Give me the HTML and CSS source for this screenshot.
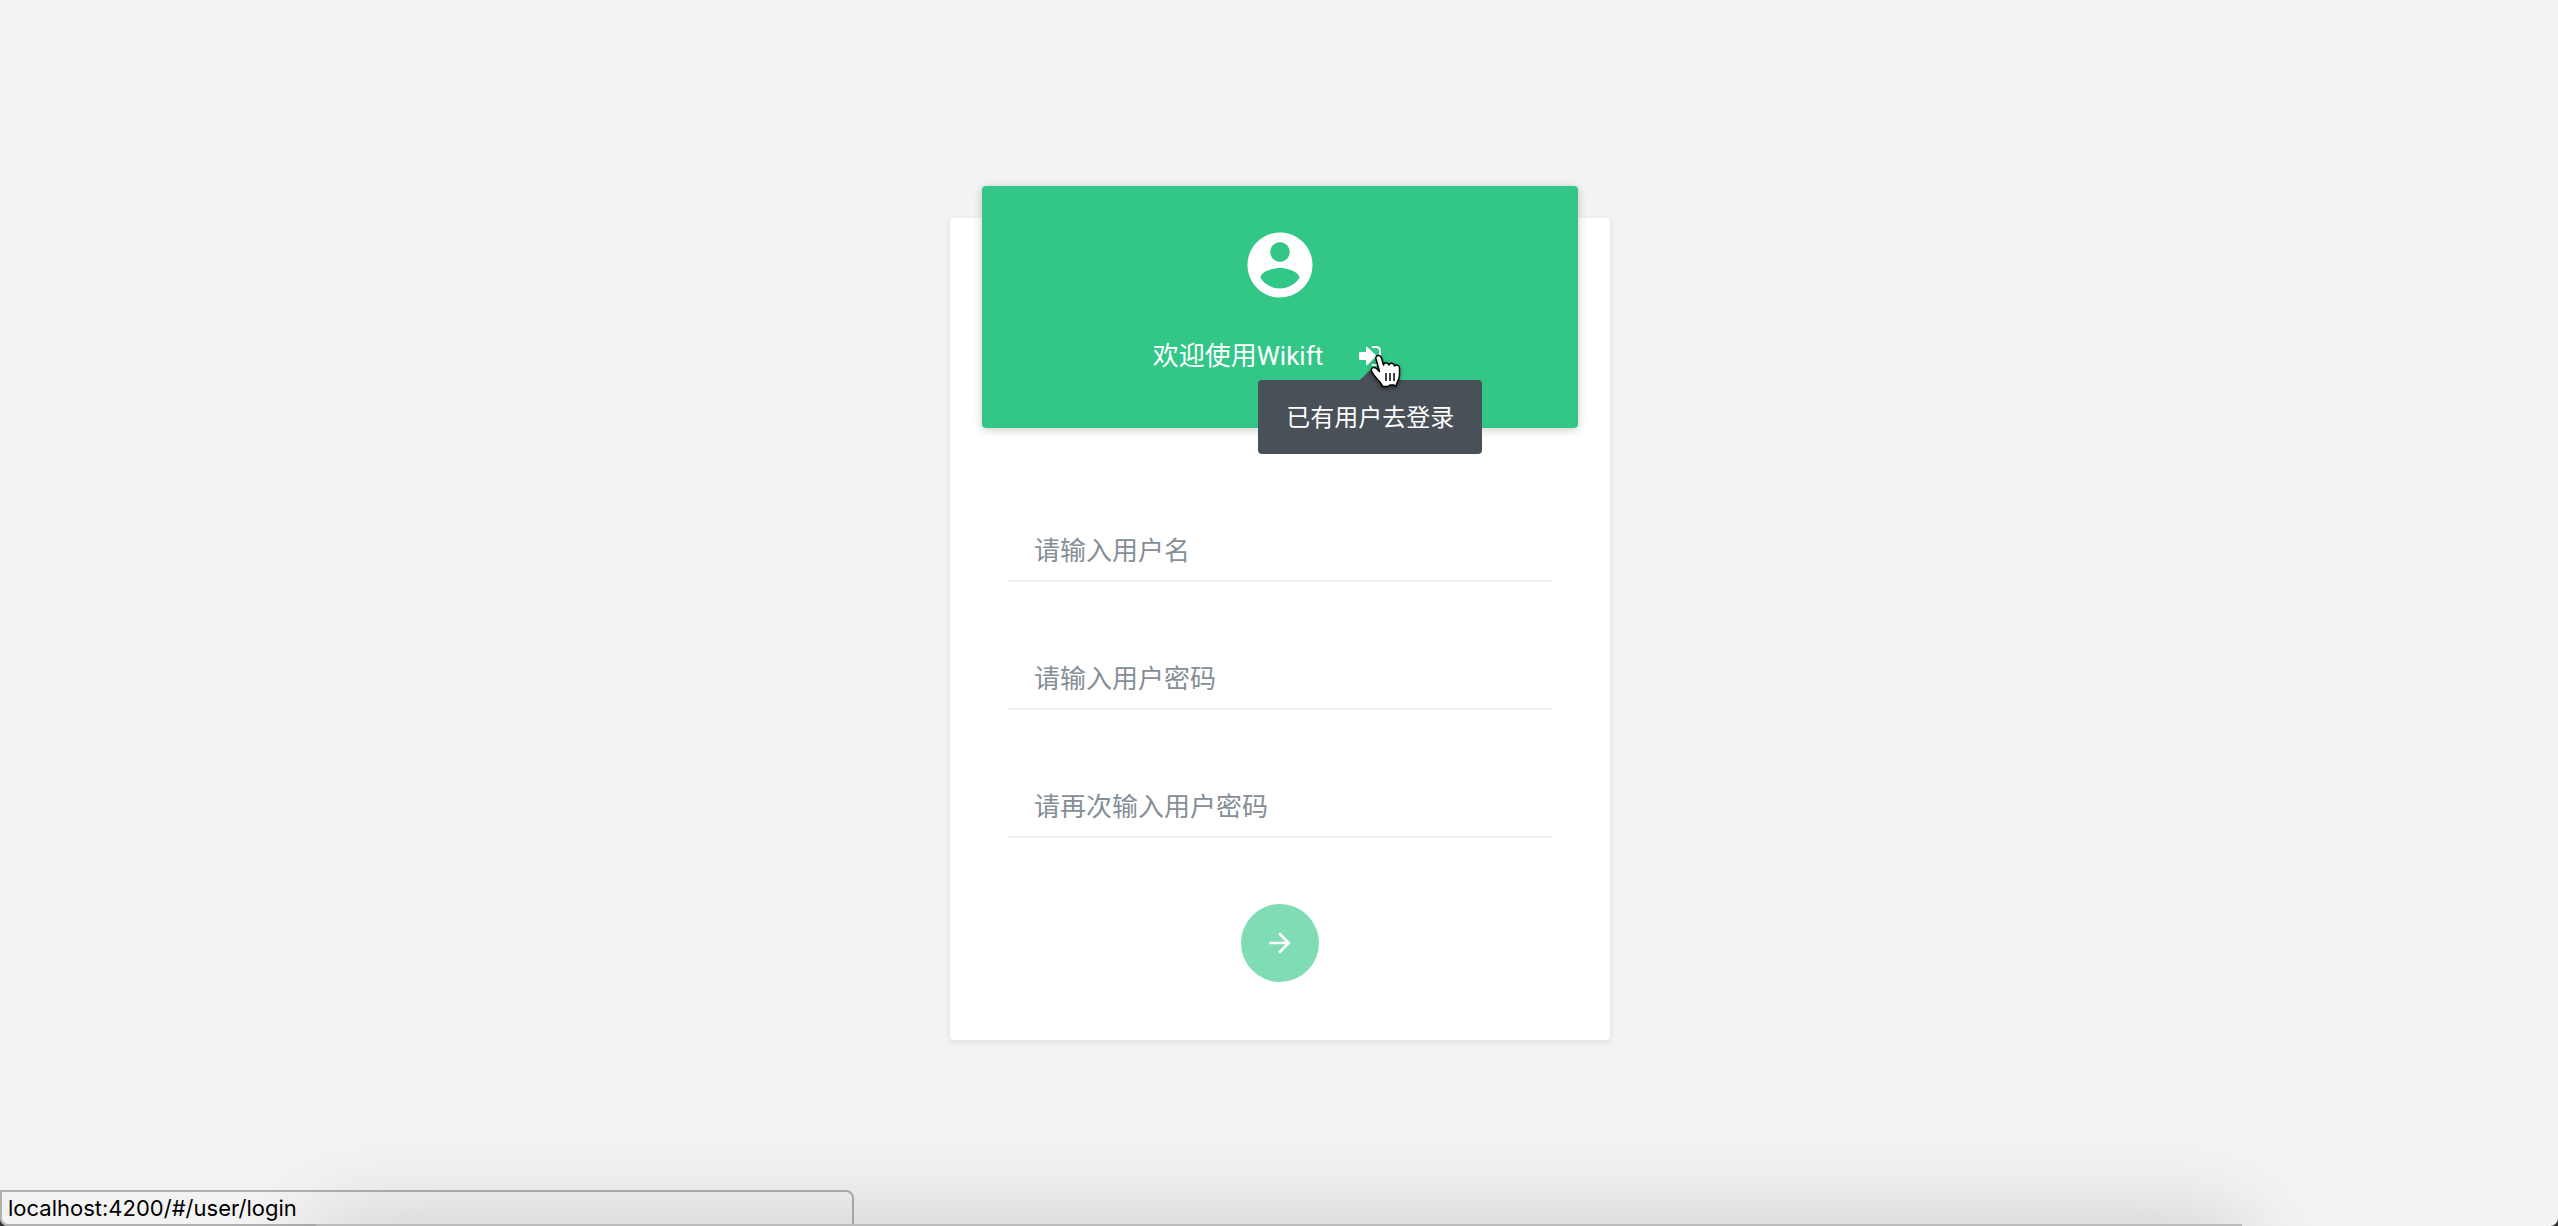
FILE: index.html
```html
<!DOCTYPE html>
<html lang="zh-CN">
<head>
<meta charset="utf-8">
<meta name="viewport" content="width=device-width, initial-scale=1">
<title>Wikift</title>
<link rel="stylesheet" href="styles.css">
</head>
<body>
<main class="page">
  <section class="card">
    <header class="card-header">
      <svg class="avatar" viewBox="0 0 24 24" aria-hidden="true"><path fill="currentColor" d="M12 2C6.480 2 2 6.480 2 12s4.480 10 10 10 10-4.480 10-10S17.520 2 12 2zm0 3c1.660 0 3 1.340 3 3s-1.340 3-3 3-3-1.340-3-3 1.340-3 3-3zm0 14.200c-2.500 0-4.710-1.280-6-3.220.03-1.990 4-3.080 6-3.080 1.990 0 5.970 1.090 6 3.080-1.290 1.940-3.500 3.220-6 3.220z"/></svg>
      <div class="welcome">
        <span>欢迎使用Wikift</span>
        <a class="login-link" href="#/user/login" aria-describedby="login-tip" aria-label="登录">
          <svg class="login-icon" viewBox="0 0 22 20" aria-hidden="true"><path fill="currentColor" d="M1 6h6V2q0-2 1.500-.7l8.200 7.800q.9.900 0 1.800l-8.200 7.800Q7 20 7 18v-4H1q-1 0-1-1V7q0-1 1-1z"/><path fill="none" stroke="currentColor" stroke-width="2" d="M13 1h4q4 0 4 4v10q0 4-4 4h-4"/></svg>
          <span class="tooltip" id="login-tip" role="tooltip">已有用户去登录</span>
          <svg class="pointer" viewBox="0 0 32 34" aria-hidden="true"><path fill="#fff" stroke="#000" stroke-width="1.500" stroke-linejoin="round" d="M13.500 32.500C12.500 28 6 24 3 18 0.500 14 5 12 8 15L10.500 17.500 7 5C6 1 11 0 12.500 4L14.500 11C15 8 19 8 20 11 21 8 25 9 25.500 12 27 10 30.500 11 30.500 14V21C30.500 26 27.500 28 27 32.500L25 31H21L19 32.500Z"/><path stroke="#000" stroke-width="1.500" d="M17 19v8M21 19v8M25 19v8"/></svg>
        </a>
      </div>
    </header>
    <form class="form">
      <input class="field" type="text" placeholder="请输入用户名" aria-label="请输入用户名">
      <input class="field" type="password" placeholder="请输入用户密码" aria-label="请输入用户密码">
      <input class="field" type="password" placeholder="请再次输入用户密码" aria-label="请再次输入用户密码">
      <button class="submit" type="submit" aria-label="注册" disabled>
        <svg class="arrow" viewBox="0 0 24 24" aria-hidden="true"><path fill="currentColor" d="M12 4l-1.410 1.410L16.170 11H4v2h12.170l-5.580 5.590L12 20l8-8z"/></svg>
      </button>
    </form>
  </section>
</main>
<div class="status-bar">localhost:4200/#/user/login</div>
<div class="dock-shadow"></div>
</body>
</html>
```
FILE: styles.css
```css
*, *::before, *::after { box-sizing: border-box; }

html { background: #333; }

body {
  margin: 0;
  color: #fff;
  font: 26px/40px Roboto, "Noto Sans CJK SC", sans-serif;
}

.page {
  display: flex;
  align-items: center;
  justify-content: center;
  min-height: 100vh;
  padding: 32px 0 0 2px;
  background: #f3f3f3;
  border-radius: 0 0 8px 8px;
}

.card {
  width: 100%;
  max-width: 660px;
  padding: 0 32px 58px;
  background: #fff;
  border-radius: 4px;
  box-shadow: 0 2px 6px rgba(0, 0, 0, 0.09);
}

.card-header {
  display: flex;
  flex-direction: column;
  align-items: center;
  gap: 32px;
  margin-top: -32px;
  padding: 40px 0 52px;
  background: #32c787;
  border-radius: 4px;
  box-shadow: 0 2px 10px rgba(0, 0, 0, 0.2);
}

.avatar { width: 78px; height: 78px; }

.welcome {
  display: flex;
  align-items: center;
  gap: 36px;
  padding-right: 26px;
}

.login-link {
  position: relative;
  display: flex;
  color: inherit;
  text-decoration: none;
}

.login-icon { width: 22px; height: 20px; }

.tooltip {
  position: absolute;
  top: 34px;
  left: 50%;
  padding: 18px 28px 16px;
  background: #495057;
  border-radius: 4px;
  font-size: 24px;
  white-space: nowrap;
  transform: translateX(-50%);
}

.tooltip::before {
  position: absolute;
  bottom: 100%;
  left: 50%;
  margin-left: -10px;
  border: solid transparent;
  border-width: 0 10px 10px;
  border-bottom-color: #495057;
  content: "";
}

.pointer {
  position: absolute;
  top: 8px;
  left: 10px;
  width: 32px;
  height: 34px;
  filter: drop-shadow(0 2px 2px rgba(0, 0, 0, 0.4));
}

.form {
  display: flex;
  flex-direction: column;
  gap: 66px;
  padding: 92px 26px 0;
}

.field {
  width: 100%;
  height: 62px;
  padding: 2px 26px 0;
  background: transparent;
  border: 0;
  border-bottom: 2px solid #eceff1;
  border-radius: 0;
  color: #495057;
  font: inherit;
}

.field::placeholder { color: #868e96; opacity: 1; }

.submit {
  display: grid;
  place-items: center;
  align-self: center;
  width: 78px;
  height: 78px;
  padding: 0;
  background: #7fdcb4;
  border: 0;
  border-radius: 50%;
  color: #fff;
}

.arrow { width: 32px; height: 32px; }

.status-bar {
  position: fixed;
  bottom: 0;
  left: 0;
  width: 854px;
  max-width: 100%;
  height: 36px;
  padding: 0 6px;
  background: #f3f3f3;
  border: 2px solid #b0b0b0;
  border-radius: 0 8px 0 8px;
  color: #000;
  font: 22px/32px Inter, sans-serif;
}

.dock-shadow {
  position: fixed;
  right: 316px;
  bottom: -158px;
  left: 316px;
  height: 160px;
  background: #bbb;
  box-shadow: 0 0 96px rgba(0, 0, 0, 0.17);
  pointer-events: none;
}
```
